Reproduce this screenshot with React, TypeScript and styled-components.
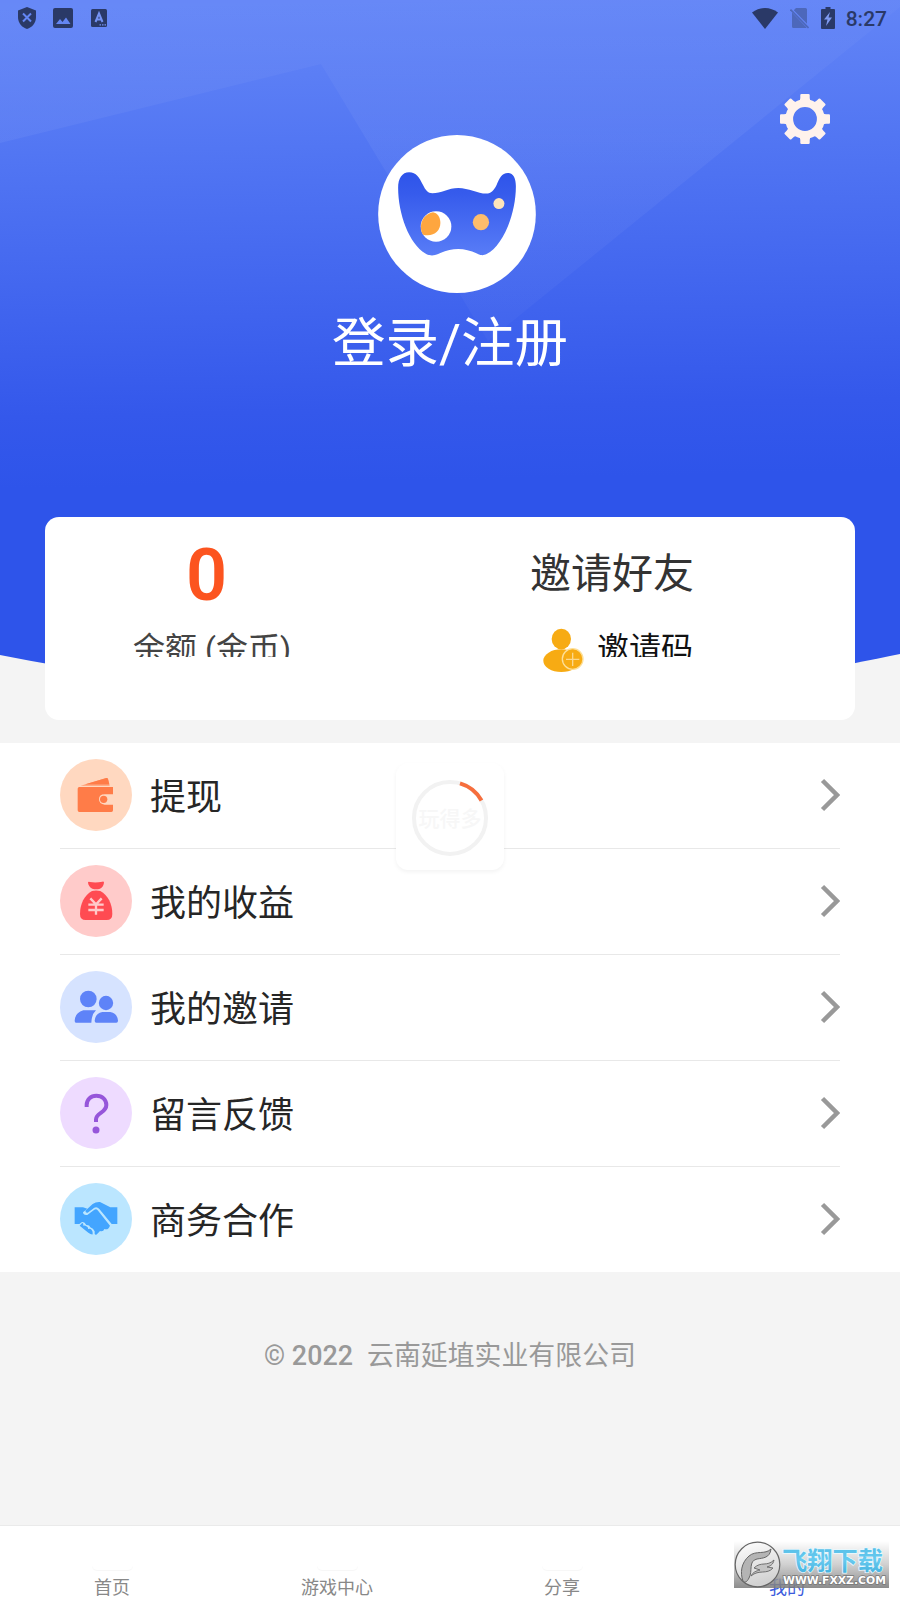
import React from 'react';
import styled, { createGlobalStyle } from 'styled-components';

const GlobalStyle = createGlobalStyle`
  * { box-sizing: border-box; }
  body {
    margin: 0;
    background: #f4f4f4;
    font-family: Roboto, 'Noto Sans CJK SC', sans-serif;
  }
  svg { display: block; }
`;

const Screen = styled.div`
  position: relative;
  width: 900px;
  height: 1600px;
  overflow: hidden;
  display: flex;
  flex-direction: column;
  background: #f4f4f4;
`;

const Hero = styled.header`
  position: relative;
  height: 517px;
  flex: none;
  display: flex;
  flex-direction: column;
`;

const Backdrop = styled.svg`
  position: absolute;
  top: 0;
  left: 0;
`;

const StatusBar = styled.div`
  position: relative;
  height: 36px;
  padding: 0 13px 0 18px;
  display: flex;
  justify-content: space-between;
  align-items: center;
  color: #2a3967;
`;

const StatusGroup = styled.div<{ $gap: number }>`
  display: flex;
  align-items: center;
  gap: ${(p) => p.$gap}px;
`;

const Clock = styled.span`
  font-size: 21px;
  font-weight: 500;
  line-height: 24px;
  margin: 2px 0 0 -1px;
`;

const Toolbar = styled.div`
  position: relative;
  display: flex;
  justify-content: flex-end;
  padding: 58px 70px 0 0;
`;

const Avatar = styled.div`
  position: relative;
  width: 158px;
  height: 158px;
  margin: -9px 0 0 378px;
`;

const LoginTitle = styled.h1`
  position: relative;
  margin: 11px 0 0;
  text-align: center;
  color: #fff;
  font-size: 53.5px;
  line-height: 80px;
  font-weight: 400;
`;

const BalanceCard = styled.section`
  position: relative;
  flex: none;
  display: flex;
  height: 203px;
  margin: 0 45px;
  border-radius: 14px;
  background: #fff;
`;

const CardColumn = styled.div<{ $width: number; $pad: number }>`
  width: ${(p) => p.$width}px;
  padding-left: ${(p) => p.$pad}px;
  display: flex;
  flex-direction: column;
`;

const Coins = styled.div`
  width: 147px;
  height: 99px;
  padding-top: 17px;
  text-align: center;
  color: #fc541f;
  font-size: 72px;
  line-height: 84px;
  font-weight: 600;
`;

const InviteTitle = styled.div`
  height: 99px;
  padding-top: 27px;
  color: #333;
  font-size: 41px;
  line-height: 60px;
`;

const ClippedLabel = styled.div<{ $color: string }>`
  height: 26px;
  margin-top: 15px;
  overflow: hidden;
  white-space: nowrap;
  font-size: 32px;
  line-height: 37px;
  color: ${(p) => p.$color};
`;

const InviteRow = styled.div`
  display: flex;
  gap: 13px;
  padding-left: 12px;
`;

const InviteIcon = styled.div`
  margin-top: 12px;
`;

const Menu = styled.nav`
  position: relative;
  flex: none;
  margin-top: 23px;
  padding: 0 60px;
  height: 529px;
  background: #fff;
`;

const MenuRow = styled.div`
  display: flex;
  align-items: center;
  height: 106px;
  padding-bottom: 2px;
  border-bottom: 1px solid #e8e8e8;
  &:last-of-type { border-bottom: 0; height: 105px; }
`;

const MenuIcon = styled.div<{ $bg: string }>`
  width: 72px;
  height: 72px;
  border-radius: 50%;
  overflow: hidden;
  background: ${(p) => p.$bg};
`;

const MenuLabel = styled.span`
  flex: 1;
  margin: 6px 0 0 18px;
  font-size: 36px;
  line-height: 54px;
  color: #262626;
`;

const Loader = styled.div`
  position: absolute;
  left: 396px;
  top: 763px;
  width: 108px;
  height: 107px;
  padding-top: 2px;
  border-radius: 12px;
  background: #fff;
  box-shadow: 0 2px 4px rgba(0, 0, 0, 0.05);
  display: grid;
  place-items: center;
  & > * { grid-area: 1 / 1; }
`;

const LoaderText = styled.span`
  font-size: 21px;
  line-height: 30px;
  font-weight: 500;
  padding-top: 2px;
  color: #f7f7f7;
`;

const Copyright = styled.footer`
  flex: 1;
  padding-top: 64px;
  display: flex;
  justify-content: center;
  gap: 14px;
  font-size: 26.9px;
  line-height: 40px;
  color: #999;
  white-space: nowrap;
`;

const Year = styled.span`
  font-weight: 500;
`;

const TabBar = styled.nav`
  flex: none;
  height: 75px;
  display: grid;
  grid-template-columns: repeat(4, 1fr);
  border-top: 1px solid #eaeaea;
  background: #fff;
`;

const Tab = styled.div<{ $active?: boolean }>`
  display: flex;
  flex-direction: column;
  align-items: center;
  padding-right: 1px;
  font-size: 18px;
  line-height: 26px;
  color: ${(p) => (p.$active ? '#3c5cdd' : '#888')};
`;

const TabIconSlot = styled.div`
  width: 41px;
  height: 44px;
  margin-bottom: 5px;
  border-radius: 5px;
  background: #fff;
  box-shadow: 0 1px 1px rgba(0, 0, 0, 0.035);
`;

const Badge = styled.div`
  position: absolute;
  left: 734px;
  top: 1541px;
`;

const HeroBackdrop = () => (
  <Backdrop width="900" height="680" viewBox="0 0 900 680">
    <defs>
      <linearGradient id="sky" gradientUnits="userSpaceOnUse" x1="440" y1="0" x2="450" y2="480">
        <stop offset="0" stopColor="#6486f7" />
        <stop offset="0.3" stopColor="#5276f3" />
        <stop offset="0.65" stopColor="#3f63ee" />
        <stop offset="0.85" stopColor="#3458eb" />
        <stop offset="1" stopColor="#2e54ea" />
      </linearGradient>
      <linearGradient id="sheen" x1="0" y1="0" x2="0" y2="1">
        <stop offset="0" stopColor="#fff" stopOpacity="0.02" />
        <stop offset="0.4" stopColor="#fff" stopOpacity="0.05" />
        <stop offset="1" stopColor="#fff" stopOpacity="0.025" />
      </linearGradient>
    </defs>
    <path d="M0 0H900V654Q855 663 840 666Q450 730 60 666Q30 661 0 655Z" fill="url(#sky)" />
    <path d="M0 0H900V7L488 341L321 64L0 143Z" fill="url(#sheen)" />
  </Backdrop>
);

const ShieldIcon = () => (
  <svg width="18" height="22" viewBox="0 0 18 22">
    <path d="M9 0L18 3.6V10C18 16 14 20.5 9 22C4 20.5 0 16 0 10V3.6Z" fill="currentColor" />
    <path d="M5 6.5L13 14.5M13 6.5L5 14.5" stroke="#6486f4" strokeWidth="2" />
  </svg>
);

const PhotoIcon = () => (
  <svg width="20" height="20" viewBox="0 0 20 20">
    <rect width="20" height="20" rx="2" fill="currentColor" />
    <path d="M3 16L7 11L9.5 14L13 9.5L17.5 16Z" fill="#6486f4" />
  </svg>
);

const KeyboardIcon = () => (
  <svg width="17" height="18" viewBox="-1 0 17 18">
    <rect width="16" height="18" rx="1.5" fill="currentColor" />
    <path d="M4.5 13L8 4.5L11.5 13M5.8 10.5H10.2" fill="none" stroke="#7593f4" strokeWidth="2" />
    <path d="M8.5 15.8H15" stroke="#7593f4" strokeWidth="1.2" strokeDasharray="1.5 1" />
  </svg>
);

const WifiIcon = () => (
  <svg width="26" height="21" viewBox="0 0 26 21">
    <path d="M0 4.5Q6 0 13 0T26 4.5L13 21Z" fill="currentColor" />
  </svg>
);

const NoSimIcon = () => (
  <svg width="19" height="21" viewBox="0 0 19 21">
    <path d="M6 0H15.5Q17 0 17 1.5V15.8L3.800 2.2Z" fill="#4d68bb" />
    <path d="M2 4.500L16.500 19.500Q16 20 15.500 20H3.500Q2 20 2 18.500Z" fill="#4d68bb" />
    <path d="M0.5 1.5L18.500 20" stroke="#4d68bb" strokeWidth="1.6" />
  </svg>
);

const BatteryIcon = () => (
  <svg width="14" height="22" viewBox="0 0 14 22">
    <path d="M4.5 0H9.5V2H13Q14 2 14 3V21Q14 22 13 22H1Q0 22 0 21V3Q0 2 1 2H4.5Z" fill="currentColor" />
    <path d="M9 5L3 12.5H6.5L5 19L11 10.5H7.5Z" fill="#7f9af0" />
  </svg>
);

const GearIcon = () => (
  <svg width="50" height="50" viewBox="-25 -25 50 50">
    <circle r="15.8" fill="none" stroke="#fff2ec" strokeWidth="7.8" />
    {[0, 45, 90, 135, 180, 225, 270, 315].map((a) => (
      <path key={a} d="M-5.5 -17L-4.7 -21V-24Q-4.7 -25 -3.5 -25H3.5Q4.7 -25 4.7 -24V-21L5.5 -17Z" fill="#fff2ec" transform={`rotate(${a})`} />
    ))}
  </svg>
);

const CatLogo = () => (
  <svg width="158" height="158" viewBox="54 44 474 475">
    <defs>
      <linearGradient id="mask" x1="0" y1="0" x2="0" y2="1">
        <stop offset="0" stopColor="#2e54ea" />
        <stop offset="0.25" stopColor="#365bec" />
        <stop offset="1" stopColor="#587cf7" />
      </linearGradient>
    </defs>
    <ellipse cx="291" cy="281.5" rx="237" ry="237.5" fill="#fff" />
    <path d="M114 203C114 174 126 156 147 156C169 156 177 171 188 193C197 211 203 219 217 219C243 219 265 203 295 203C326 203 353 220 379 220C394 220 402 210 410 194C419 174 425 158 444 158C461 158 468 175 468 198C468 286 427 378 380 402C368 408 361 405 351 400C313 382 278 382 241 399C224 407 211 409 196 400C147 371 114 280 114 203Z" fill="url(#mask)" />
    <circle cx="228" cy="319" r="46" fill="#fff" />
    <path d="M219 276C231 278 241 290 241 308C241 334 220 351 189 344C176 325 181 283 219 276Z" fill="#fea63f" />
    <circle cx="363" cy="306" r="24.5" fill="#fdbd6c" />
    <circle cx="417" cy="250" r="16.5" fill="#fee4ba" />
  </svg>
);

const AddFriendIcon = () => (
  <svg width="42" height="45" viewBox="276 383 126 135">
    <ellipse cx="334" cy="416" rx="29" ry="31" fill="#f7ab13" />
    <ellipse cx="334" cy="481" rx="54" ry="34" fill="#f7ab13" />
    <circle cx="368" cy="476" r="31" fill="#f7ab13" stroke="#fddf98" strokeWidth="4" />
    <path d="M348 477H388M368 457V497" stroke="#fcd88d" strokeWidth="4" />
  </svg>
);

const WalletIcon = () => (
  <svg width="72" height="72" viewBox="60 57 216 216">
    <path d="M122 137L199 114Q203 113 204 117L209 137Z" fill="#ff9b70" />
    <path d="M136 133L199 114Q203 113 204 117L208 133Z" fill="#ff7c48" />
    <path d="M118 141H219V163H194Q177 163 177 178T194 194H219V211Q219 216 214 216H118Q113 216 113 211V146Q113 141 118 141Z" fill="#ff7c48" />
    <circle cx="191" cy="178" r="11" fill="#ff7c48" />
  </svg>
);

const MoneyBagIcon = () => (
  <svg width="72" height="72" viewBox="60 375 216 216">
    <path d="M144 428Q144 424 150 426Q168 429 187 425Q192 424 192 428Q190 441 180 446Q168 450 157 446Q146 440 144 428Z" fill="#ff4b52" />
    <path d="M156 453Q168 450 181 453C204 465 217 492 217 522Q217 540 200 540H137Q120 540 120 522C120 492 133 465 156 453Z" fill="#ff4b52" />
    <path d="M151 475L168 493L185 475M168 493V524M145 494H191M145 510H191" fill="none" stroke="#ffcaca" strokeWidth="7" />
  </svg>
);

const PeopleIcon = () => (
  <svg width="72" height="72" viewBox="60 693 216 216">
    <g fill="#5e83f8">
      <circle cx="145" cy="777" r="25" />
      <circle cx="198" cy="789" r="21.5" />
      <path d="M130 811H168Q155 823 154 848H108Q104 848 104 842Q105 818 130 811Z" />
      <path d="M187 816H211Q232 820 234 842Q234 848 229 848H169Q164 848 164 842Q166 820 187 816Z" />
    </g>
  </svg>
);

const QuestionIcon = () => (
  <svg width="72" height="72" viewBox="60 111 216 216">
    <path d="M140 201V195C140 179 152 167 169 167C187 167 199 179 199 195C199 219 168 218 168 238V246" fill="none" stroke="#9656da" strokeWidth="12" />
    <circle cx="168" cy="270" r="10.5" fill="#9656da" />
  </svg>
);

const HandshakeIcon = () => (
  <svg width="72" height="72" viewBox="60 429 216 216">
    <g fill="#43a5ff">
      <path d="M104 502H129L142 506L129 517Q130 527 142 525L163 509Q169 505 173 511L210 557Q205 571 193 567Q190 576 180 573Q174 580 168 585L164 582V574Q160 565 151 562Q148 554 139 555Q133 544 126 546L118 552H104Z" />
      <path d="M136 512L158 492Q168 485 180 486L211 502H232V552H215L178 507Q171 499 163 503L143 518Q137 520 136 512Z" />
      <path d="M119 557L127 548Q131 551 130 557Q137 555 142 561Q145 562 144 567Q151 565 155 570Q159 574 158 583Q153 584 145 578Z" />
    </g>
  </svg>
);

const Chevron = () => (
  <svg width="20" height="34" viewBox="0 0 20 34">
    <path d="M2.5 2.5L17 17L2.5 31.5" fill="none" stroke="#999" strokeWidth="4.5" />
  </svg>
);

const LoaderRing = () => (
  <svg width="76" height="76" viewBox="-38 -38 76 76">
    <circle r="36" fill="none" stroke="#f2f2f2" strokeWidth="4" />
    <path d="M10 -34.6A36 36 0 0 1 31.5 -17.5" fill="none" stroke="#f66e3d" strokeWidth="4" />
  </svg>
);

const SiteBadge = () => (
  <svg width="155" height="47" viewBox="0 0 155 47">
    <defs>
      <linearGradient id="plate" x1="0" y1="0" x2="0" y2="1">
        <stop offset="0" stopColor="#fff" />
        <stop offset="0.5" stopColor="#c8c8c8" />
        <stop offset="1" stopColor="#787878" />
      </linearGradient>
      <linearGradient id="disc" x1="0" y1="0" x2="0.3" y2="1">
        <stop offset="0" stopColor="#fff" />
        <stop offset="1" stopColor="#d2d2d2" />
      </linearGradient>
      <linearGradient id="cyan" x1="0" y1="0" x2="0" y2="1">
        <stop offset="0" stopColor="#4db9e4" />
        <stop offset="0.55" stopColor="#68caef" />
        <stop offset="1" stopColor="#3dacdb" />
      </linearGradient>
    </defs>
    <rect width="155" height="47" fill="url(#plate)" fillOpacity="0.85" />
    <circle cx="23.5" cy="23.5" r="22.3" fill="url(#disc)" stroke="#666" strokeWidth="1.2" />
    <path d="M9 40C6 32 7 22 15 15C22 9 31 14 37 8C36 17 29 17 23 18C14 20 19 30 15 37C13 41 11 42 9 40Z" fill="#b4b4b4" stroke="#666" strokeWidth="1" />
    <path d="M20 27C27 20 33 26 40 19C39 24 36 25 33 26L39 27C33 34 25 28 17 35C19 31 22 30 26 29Z" fill="#c4c4c4" stroke="#666" strokeWidth="0.9" />
    <text x="48" y="28.5" textLength="101" lengthAdjust="spacingAndGlyphs" fontFamily="'Noto Sans CJK SC', sans-serif" fontWeight="700" fontSize="25.5" fill="url(#cyan)" stroke="#e9f9ff" strokeWidth="1.5" paintOrder="stroke">飞翔下载</text>
    <text x="49" y="43" textLength="103" lengthAdjust="spacingAndGlyphs" fontFamily="'DejaVu Sans', sans-serif" fontWeight="700" fontSize="10.5" fill="#fff" stroke="#777" strokeWidth="1.4" paintOrder="stroke">WWW.FXXZ.COM</text>
  </svg>
);

const menuItems = [
  { label: '提现', bg: '#ffd8c0', Icon: WalletIcon },
  { label: '我的收益', bg: '#ffcbca', Icon: MoneyBagIcon },
  { label: '我的邀请', bg: '#d6e3ff', Icon: PeopleIcon },
  { label: '留言反馈', bg: '#eedbff', Icon: QuestionIcon },
  { label: '商务合作', bg: '#bbe6ff', Icon: HandshakeIcon },
];

const tabs = ['首页', '游戏中心', '分享', '我的'];

export default function App() {
  return (
    <Screen>
      <GlobalStyle />
      <Hero>
        <HeroBackdrop />
        <StatusBar>
          <StatusGroup $gap={17}>
            <ShieldIcon />
            <PhotoIcon />
            <KeyboardIcon />
          </StatusGroup>
          <StatusGroup $gap={12}>
            <WifiIcon />
            <NoSimIcon />
            <BatteryIcon />
            <Clock>8:27</Clock>
          </StatusGroup>
        </StatusBar>
        <Toolbar>
          <GearIcon />
        </Toolbar>
        <Avatar>
          <CatLogo />
        </Avatar>
        <LoginTitle>登录/注册</LoginTitle>
      </Hero>

      <BalanceCard>
        <CardColumn $width={405} $pad={88}>
          <Coins>0</Coins>
          <ClippedLabel $color="#444">余额 (金币)</ClippedLabel>
        </CardColumn>
        <CardColumn $width={405} $pad={80}>
          <InviteTitle>邀请好友</InviteTitle>
          <InviteRow>
            <InviteIcon>
              <AddFriendIcon />
            </InviteIcon>
            <ClippedLabel $color="#111">邀请码</ClippedLabel>
          </InviteRow>
        </CardColumn>
      </BalanceCard>

      <Menu>
        {menuItems.map(({ label, bg, Icon }) => (
          <MenuRow key={label}>
            <MenuIcon $bg={bg}>
              <Icon />
            </MenuIcon>
            <MenuLabel>{label}</MenuLabel>
            <Chevron />
          </MenuRow>
        ))}
      </Menu>

      <Copyright>
        <Year>© 2022</Year>
        <span>云南延埴实业有限公司</span>
      </Copyright>

      <TabBar>
        {tabs.map((label, i) => (
          <Tab key={label} $active={i === 3}>
            <TabIconSlot />
            {label}
          </Tab>
        ))}
      </TabBar>

      <Loader>
        <LoaderRing />
        <LoaderText>玩得多</LoaderText>
      </Loader>
      <Badge>
        <SiteBadge />
      </Badge>
    </Screen>
  );
}
